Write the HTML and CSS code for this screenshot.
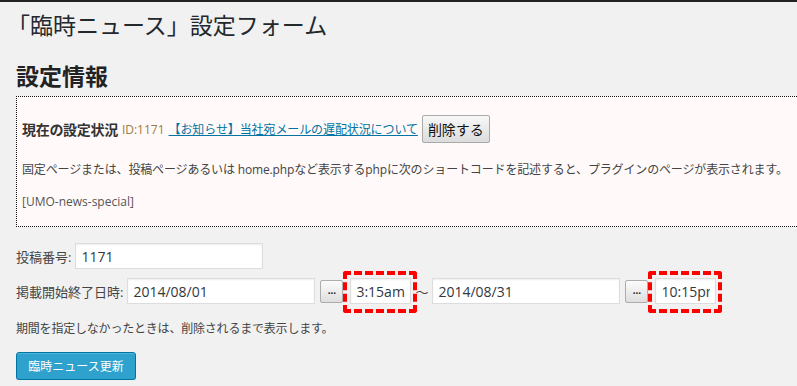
FILE: index.html
```html
<!DOCTYPE html>
<html lang="ja">
<head>
    <meta charset="UTF-8">
    <title>「臨時ニュース」設定フォーム</title>
    <link rel="stylesheet" href="styles.css">
</head>
<body>
<div class="wrap">
    <h1 class="page-title">「臨時ニュース」設定フォーム</h1>
    <h2 class="section-title">設定情報</h2>

    <div class="info-box">
        <p class="status">
            <strong class="status-label">現在の設定状況</strong>
            <span class="post-id">ID:1171</span>
            <a href="#">【お知らせ】当社宛メールの遅配状況について</a>
            <button class="btn" type="button">削除する</button>
        </p>
        <p class="note">固定ページまたは、投稿ページあるいは home.phpなど表示するphpに次のショートコードを記述すると、プラグインのページが表示されます。</p>
        <p class="shortcode">[UMO-news-special]</p>
    </div>

    <form class="news-form">
        <div class="row">
            <label class="label">投稿番号:</label>
            <input class="text" type="text" value="1171">
        </div>
        <div class="row">
            <label class="label">掲載開始終了日時:</label>
            <input class="text" type="text" value="2014/08/01">
            <button class="pick" type="button">...</button>
            <span class="mark"><input class="text time" type="text" value="3:15am"></span>
            <span class="tilde">〜</span>
            <input class="text" type="text" value="2014/08/31">
            <button class="pick" type="button">...</button>
            <span class="mark"><input class="text time" type="text" value="10:15pm"></span>
        </div>
        <p class="hint">期間を指定しなかったときは、削除されるまで表示します。</p>
        <button class="btn-primary" type="button">臨時ニュース更新</button>
    </form>
</div>
</body>
</html>
```

FILE: styles.css
```css
* {
    margin: 0;
    padding: 0;
    box-sizing: border-box;
}

html, body {
    overflow: hidden;
}

body {
    background-color: #f1f1f1;
    border-top: 2px solid #222;
    color: #444;
    font-family: "Open Sans", "Noto Sans CJK JP", sans-serif;
    font-size: 13px;
}

.wrap {
    padding-left: 16px;
}

.page-title {
    margin-top: 9px;
    margin-left: -9px;
    font-size: 23px;
    line-height: 29px;
    font-weight: 400;
    color: #23282d;
}

.section-title {
    margin-top: 22px;
    font-size: 23px;
    line-height: 29px;
    font-weight: 600;
    color: #222;
}

.info-box {
    margin-top: 5px;
    margin-right: -30px;
    padding: 0 5px 14px;
    border: 1px dotted #111;
    background-color: #fffaf9;
}

.status {
    display: flex;
    align-items: center;
    gap: 4px;
    margin-top: 18px;
    height: 28px;
}

.status-label {
    font-size: 14px;
    letter-spacing: -0.3px;
    color: #333;
}

.post-id {
    font-size: 12px;
    color: #9b7a45;
}

.status a {
    font-size: 12px;
    letter-spacing: -0.1px;
    color: #0074a2;
}

.btn {
    height: 28px;
    padding: 0 5px;
    border: 1px solid #a9a9a9;
    border-radius: 2px;
    background: linear-gradient(#f8f8f8, #dcdcdc);
    font-family: "Open Sans", "Noto Sans CJK JP", sans-serif;
    font-size: 14px;
    color: #111;
}

.note {
    margin-top: 17px;
    font-size: 12px;
    line-height: 20px;
    letter-spacing: -0.15px;
}

.shortcode {
    margin-top: 12px;
    font-size: 12px;
    line-height: 20px;
    color: #555;
}

.news-form {
    margin-top: 16px;
}

.row {
    display: flex;
    align-items: center;
    gap: 4px;
    margin-bottom: 9px;
}

.label {
    font-size: 13px;
    color: #444;
}

.text {
    width: 188px;
    height: 26px;
    padding: 0 5px;
    border: 1px solid #ddd;
    box-shadow: inset 0 1px 2px rgba(0, 0, 0, .07);
    background-color: #fff;
    font-family: "Open Sans", sans-serif;
    font-size: 14px;
    color: #32373c;
}

.time {
    width: 61px;
    display: block;
}

.pick {
    width: 23px;
    height: 23px;
    margin-left: 1px;
    border: 1px solid #adadad;
    border-radius: 2px;
    background: linear-gradient(#fcfcfc, #dedede);
    font-size: 10px;
    font-weight: 700;
    line-height: 20px;
    color: #222;
}

.mark {
    position: relative;
    margin-left: 3px;
}

.mark::after {
    content: "";
    position: absolute;
    top: -7px;
    right: -6px;
    bottom: -9px;
    left: -7px;
    border: 4px dashed #f00;
    border-radius: 3px;
}

.tilde {
    font-size: 13px;
    color: #444;
}

.hint {
    margin-top: 15px;
    font-size: 12px;
    line-height: 20px;
    letter-spacing: -0.2px;
}

.btn-primary {
    margin-top: 13px;
    width: 120px;
    height: 28px;
    border: 1px solid #0074a2;
    border-radius: 3px;
    background-color: #2ea2cc;
    box-shadow: inset 0 1px 0 rgba(120, 200, 230, .5), 0 1px 0 rgba(0, 0, 0, .15);
    font-family: "Open Sans", "Noto Sans CJK JP", sans-serif;
    font-size: 12px;
    color: #fff;
}
```
